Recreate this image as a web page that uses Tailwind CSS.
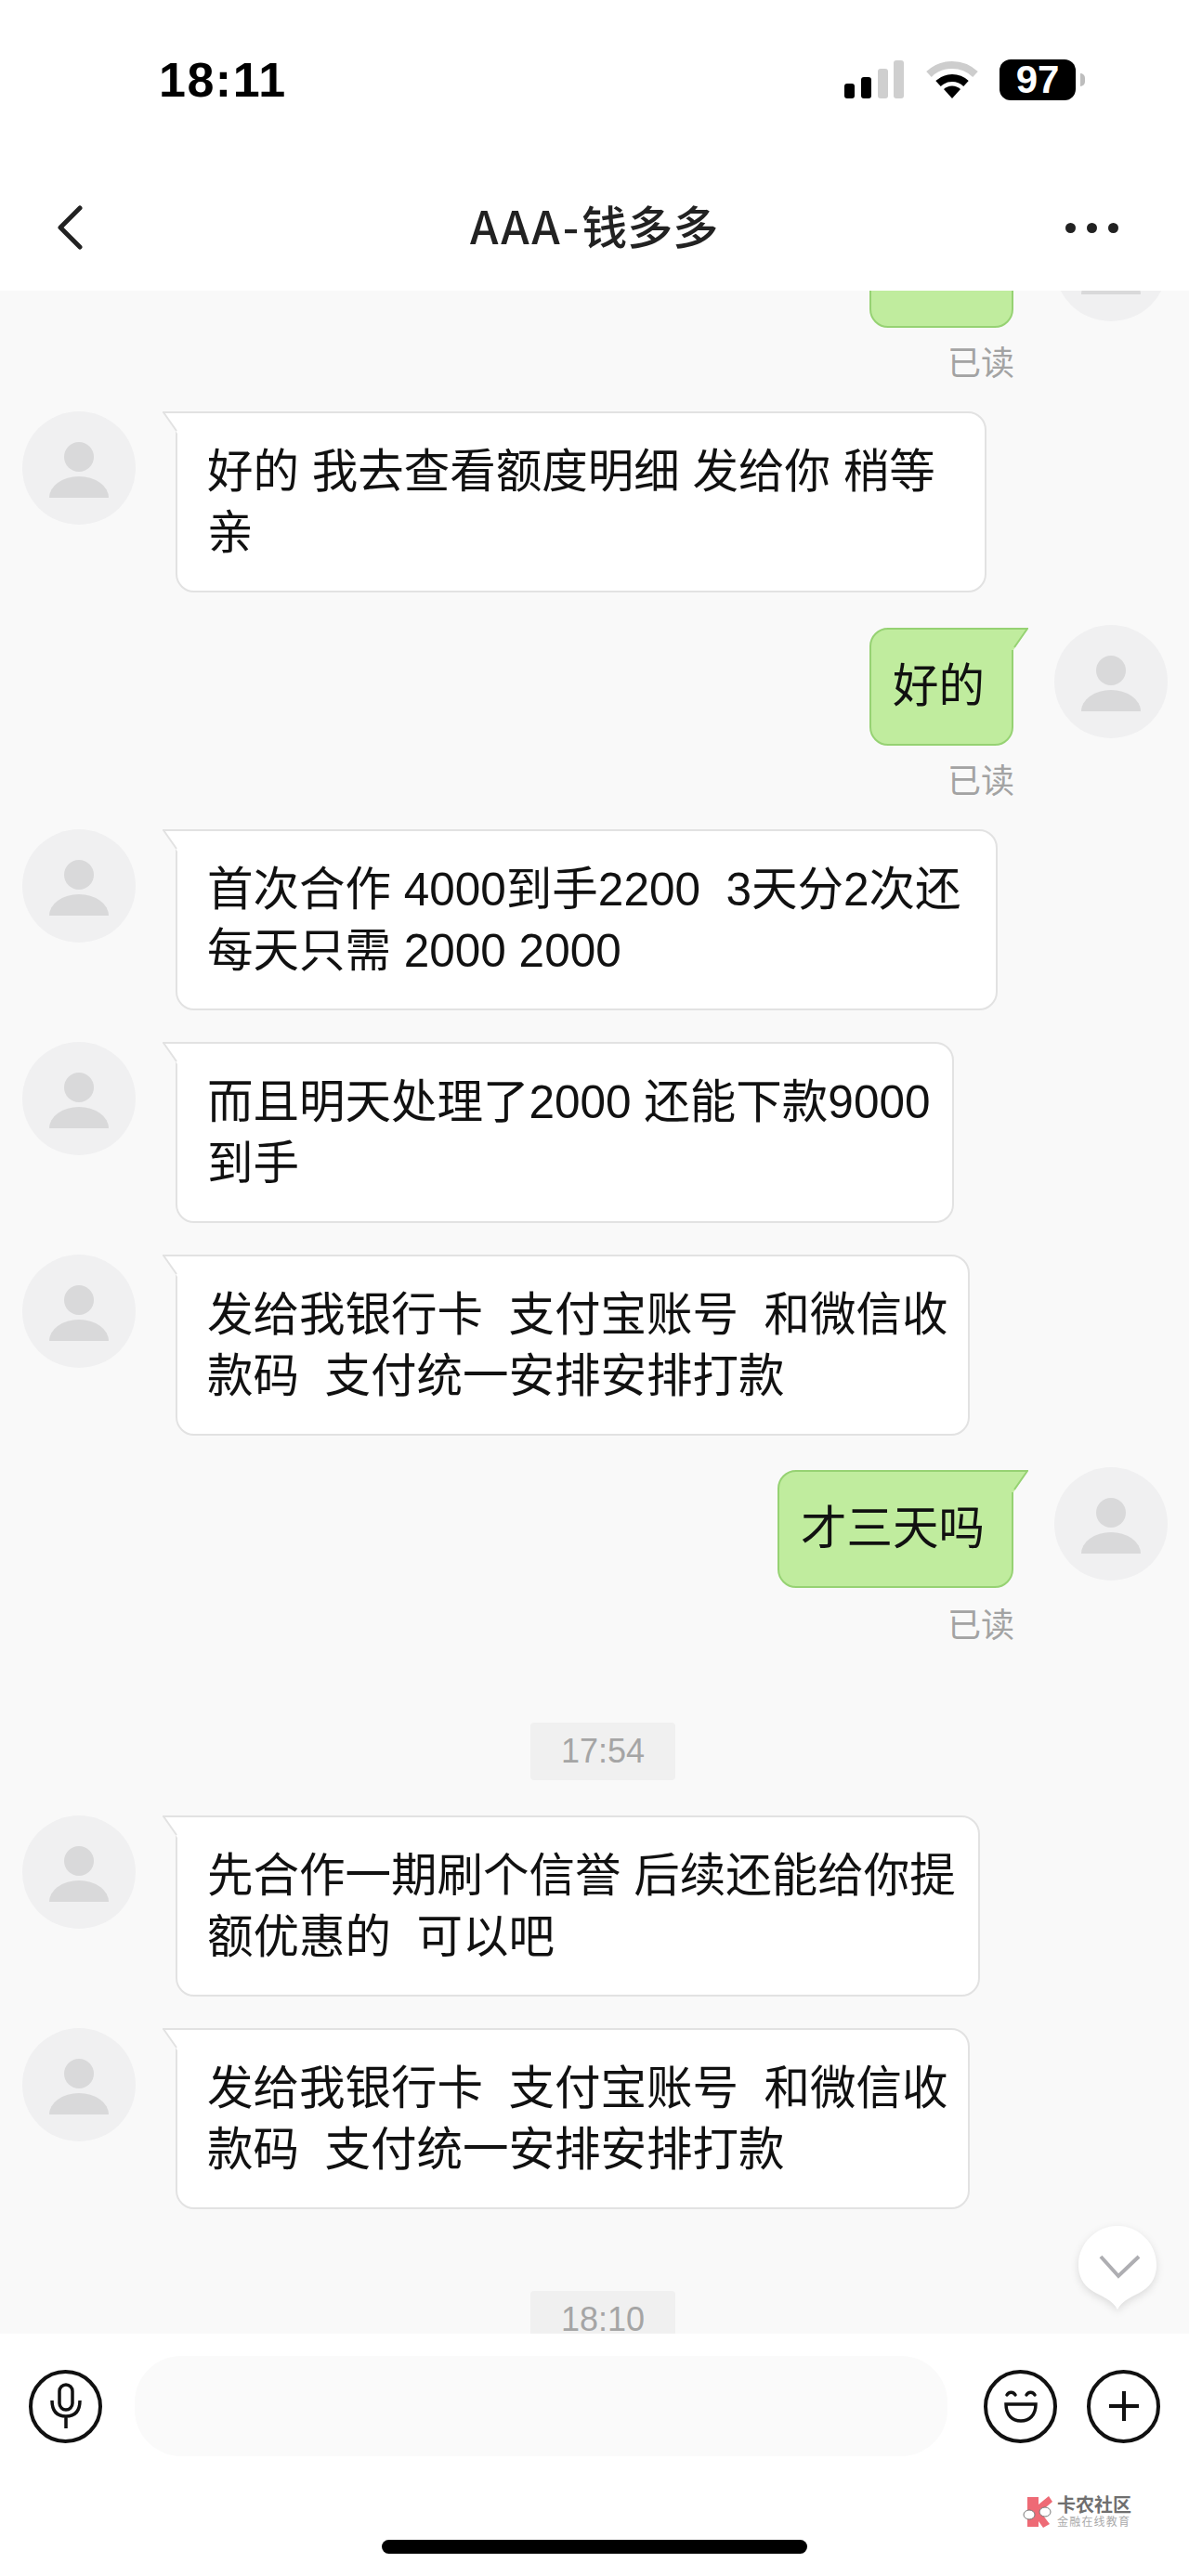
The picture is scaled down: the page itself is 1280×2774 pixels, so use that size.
<!DOCTYPE html>
<html lang="zh-CN">

<head>
  <meta charset="UTF-8" />
  <meta name="viewport" content="width=device-width, initial-scale=1.0" />
  <title>AAA-钱多多</title>
  <script src="https://cdn.jsdelivr.net/npm/@tailwindcss/browser@4"></script>
</head>

<body class="bg-white font-['Liberation_Sans','Noto_Sans_CJK_SC',sans-serif] text-[#111]">
  <svg class="hidden">
    <symbol id="avatar" viewBox="0 0 122 122">
      <circle cx="61" cy="61" r="61" fill="#f0f0f1" />
      <circle cx="61" cy="49" r="16" fill="#d9d9da" />
      <path d="M29 93 A32 23 0 0 1 93 93 Z" fill="#d9d9da" />
    </symbol>
    <symbol id="tail-white" viewBox="0 0 18 24">
      <path d="M0 0 H18 V24 H16 Z" fill="#fff" />
      <path d="M0 1 H18 M1 1 L15 21" fill="none" stroke="#e2e2e2" stroke-width="2" />
    </symbol>
    <symbol id="tail-green" viewBox="0 0 18 24">
      <path d="M18 0 H0 V24 H2 Z" fill="#c0ec9e" />
      <path d="M0 1 H17 L3 21" fill="none" stroke="#96d273" stroke-width="2" />
    </symbol>
  </svg>

  <div class="flex flex-col w-[1280px] h-[2774px] overflow-hidden">
    <!-- status bar + nav -->
    <header class="h-[313px] shrink-0 bg-white relative">
      <div class="flex items-center justify-between h-[44px] mt-[64px] pl-[171px] pr-[112px] relative">
        <span class="text-[52px] font-bold leading-none text-black tracking-[1.5px]">18:11</span>
        <div class="flex items-center">
          <svg width="64" height="41" viewBox="0 0 64 41" class="mr-[24px] mt-[-1px]">
            <rect x="0" y="25" width="11" height="16" rx="3" fill="#000" />
            <rect x="18" y="18" width="11" height="23" rx="3" fill="#000" />
            <rect x="36" y="9" width="11" height="32" rx="3" fill="#cfcfcf" />
            <rect x="53" y="0" width="11" height="41" rx="3" fill="#cfcfcf" />
          </svg>
          <svg width="56" height="41" viewBox="0 0 56 41" class="mr-[23px] mt-[-1px]">
            <path d="M3 15 A36 36 0 0 1 53 15" fill="none" stroke="#cdcdcd" stroke-width="8" />
            <path d="M13 25 A22 22 0 0 1 43 25" fill="none" stroke="#000" stroke-width="8" />
            <path d="M28 41 L19 31 A13 13 0 0 1 37 31 Z" fill="#000" />
          </svg>
          <div class="relative w-[82px] h-[44px] rounded-[12px] bg-black text-white text-[42px] font-bold leading-[44px] text-center">97</div>
          <div class="w-[5px] h-[14px] ml-[5px] rounded-r-full bg-[#bdbdbd]"></div>
        </div>
      </div>
      <nav class="absolute left-0 right-0 top-[213px] h-[64px] flex items-center justify-between pl-[61px] pr-[76px]">
        <svg width="28" height="48" viewBox="0 0 28 48">
          <path d="M25 3 L4 24 L25 45" fill="none" stroke="#222" stroke-width="5" stroke-linecap="round" stroke-linejoin="round" />
        </svg>
        <h1 class="absolute left-[506px] -top-[3px] font-['Noto_Sans_CJK_SC',sans-serif] text-[49px] leading-[64px] font-medium text-[#222]"><span class="tracking-[3px]">AAA-</span>钱多多</h1>
        <div class="flex gap-[12px]">
          <span class="w-[11px] h-[11px] rounded-full bg-[#222]"></span>
          <span class="w-[11px] h-[11px] rounded-full bg-[#222]"></span>
          <span class="w-[11px] h-[11px] rounded-full bg-[#222]"></span>
        </div>
      </nav>
    </header>

    <!-- messages -->
    <main class="relative h-[2200px] shrink-0 overflow-hidden bg-[#f9f9f9] text-[49.5px] leading-[66px]">
      <div class="flex flex-col -mt-[89px]">
        <div class="flex justify-end gap-[44px] pr-[23px]">
          <div class="relative w-[155px] h-[127px] mt-[2px] bg-[#c0ec9e] border-2 border-[#96d273] rounded-[20px] rounded-tr-none"></div>
          <svg class="w-[122px] h-[122px]"><use href="#avatar" /></svg>
        </div>
        <p class="text-right text-[36px] leading-[48px] text-[#a3a3a3] mr-[188px] mt-[15px]">已读</p>

        <div class="flex gap-[43px] pl-[24px] mt-[27px]">
          <svg class="w-[122px] h-[122px] shrink-0"><use href="#avatar" /></svg>
          <div class="relative w-[873px] px-[32px] py-[29.5px] bg-white border-2 border-[#e2e2e2] rounded-[20px] rounded-tl-none whitespace-pre"><svg class="absolute -left-[16px] -top-[2px] w-[18px] h-[24px]"><use href="#tail-white" /></svg>好的 我去查看额度明细 发给你 稍等<br />亲</div>
        </div>

        <div class="flex justify-end gap-[44px] pr-[23px] mt-[35px]">
          <div class="relative h-[127px] mt-[3px] pl-[23px] pr-[29px] py-[28px] bg-[#c0ec9e] border-2 border-[#96d273] rounded-[20px] rounded-tr-none"><svg class="absolute -right-[18px] -top-[2px] w-[18px] h-[24px]"><use href="#tail-green" /></svg>好的</div>
          <svg class="w-[122px] h-[122px] shrink-0"><use href="#avatar" /></svg>
        </div>
        <p class="text-right text-[36px] leading-[48px] text-[#a3a3a3] mr-[188px] mt-[15px]">已读</p>

        <div class="flex gap-[43px] pl-[24px] mt-[27px]">
          <svg class="w-[122px] h-[122px] shrink-0"><use href="#avatar" /></svg>
          <div class="relative w-[885px] px-[32px] py-[29.5px] bg-white border-2 border-[#e2e2e2] rounded-[20px] rounded-tl-none whitespace-pre"><svg class="absolute -left-[16px] -top-[2px] w-[18px] h-[24px]"><use href="#tail-white" /></svg>首次合作 4000到手2200  3天分2次还<br />每天只需 2000 2000</div>
        </div>

        <div class="flex gap-[43px] pl-[24px] mt-[34px]">
          <svg class="w-[122px] h-[122px] shrink-0"><use href="#avatar" /></svg>
          <div class="relative w-[838px] px-[32px] py-[29.5px] bg-white border-2 border-[#e2e2e2] rounded-[20px] rounded-tl-none whitespace-pre"><svg class="absolute -left-[16px] -top-[2px] w-[18px] h-[24px]"><use href="#tail-white" /></svg>而且明天处理了2000 还能下款9000<br />到手</div>
        </div>

        <div class="flex gap-[43px] pl-[24px] mt-[34px]">
          <svg class="w-[122px] h-[122px] shrink-0"><use href="#avatar" /></svg>
          <div class="relative w-[855px] px-[32px] py-[29.5px] bg-white border-2 border-[#e2e2e2] rounded-[20px] rounded-tl-none whitespace-pre"><svg class="absolute -left-[16px] -top-[2px] w-[18px] h-[24px]"><use href="#tail-white" /></svg>发给我银行卡  支付宝账号  和微信收<br />款码  支付统一安排安排打款</div>
        </div>

        <div class="flex justify-end gap-[44px] pr-[23px] mt-[34px]">
          <div class="relative h-[127px] mt-[3px] pl-[23px] pr-[29px] py-[28px] bg-[#c0ec9e] border-2 border-[#96d273] rounded-[20px] rounded-tr-none"><svg class="absolute -right-[18px] -top-[2px] w-[18px] h-[24px]"><use href="#tail-green" /></svg>才三天吗</div>
          <svg class="w-[122px] h-[122px] shrink-0"><use href="#avatar" /></svg>
        </div>
        <p class="text-right text-[36px] leading-[48px] text-[#a3a3a3] mr-[188px] mt-[17px]">已读</p>

        <div class="self-center w-[156px] h-[62px] mt-[80px] ml-[18px] bg-[#f0f0f0] rounded-[4px] text-center text-[36px] leading-[62px] text-[#a5a5a5]">17:54</div>

        <div class="flex gap-[43px] pl-[24px] mt-[38px]">
          <svg class="w-[122px] h-[122px] shrink-0"><use href="#avatar" /></svg>
          <div class="relative w-[866px] px-[32px] py-[29.5px] bg-white border-2 border-[#e2e2e2] rounded-[20px] rounded-tl-none whitespace-pre"><svg class="absolute -left-[16px] -top-[2px] w-[18px] h-[24px]"><use href="#tail-white" /></svg>先合作一期刷个信誉 后续还能给你提<br />额优惠的  可以吧</div>
        </div>

        <div class="flex gap-[43px] pl-[24px] mt-[34px]">
          <svg class="w-[122px] h-[122px] shrink-0"><use href="#avatar" /></svg>
          <div class="relative w-[855px] px-[32px] py-[29.5px] bg-white border-2 border-[#e2e2e2] rounded-[20px] rounded-tl-none whitespace-pre"><svg class="absolute -left-[16px] -top-[2px] w-[18px] h-[24px]"><use href="#tail-white" /></svg>发给我银行卡  支付宝账号  和微信收<br />款码  支付统一安排安排打款</div>
        </div>

        <div class="self-center w-[156px] h-[62px] mt-[88px] ml-[18px] bg-[#f0f0f0] rounded-[4px] text-center text-[36px] leading-[62px] text-[#a5a5a5]">18:10</div>
      </div>

      <!-- scroll to bottom -->
      <svg class="absolute left-[1156px] top-[2080px] drop-shadow-[0_3px_4px_rgba(0,0,0,0.12)]" width="94" height="98" viewBox="0 0 94 98">
        <path d="M47 94 C42 84 30 80 20 74 C9 67 5 57 5 46 C5 23 24 4 47 4 C70 4 89 23 89 46 C89 57 85 67 74 74 C64 80 52 84 47 94 Z" fill="#fff" />
        <path d="M29 37 L48 58 L70 37" fill="none" stroke="#aeaeb2" stroke-width="4" />
      </svg>
    </main>

    <!-- input bar -->
    <footer class="relative flex-1 bg-white">
      <div class="flex items-center h-[108px] mt-[24px] pl-[31px] pr-[31px]">
        <button class="w-[79px] h-[79px] shrink-0 rounded-full border-4 border-[#111] flex items-center justify-center">
          <svg width="40" height="50" viewBox="0 0 40 50" fill="none" stroke="#111" stroke-width="3.5">
            <rect x="13" y="2" width="14" height="27" rx="7" />
            <path d="M5 19 C5 30 10 36 20 36 C30 36 35 30 35 19 M20 36 V49" />
          </svg>
        </button>
        <div class="w-[875px] h-[108px] ml-[35px] rounded-[50px] bg-[#fafafa]"></div>
        <button class="w-[79px] h-[79px] ml-[39px] shrink-0 rounded-full border-4 border-[#111] flex items-center justify-center">
          <svg width="44" height="44" viewBox="0 0 44 44" fill="none" stroke="#111" stroke-width="3.5">
            <path d="M7 10 A5 5 0 0 1 16 10 M28 10 A5 5 0 0 1 37 10" stroke-linecap="round" />
            <path d="M6 20 H38 C38 32 31 38 22 38 C13 38 6 32 6 20 Z" />
          </svg>
        </button>
        <button class="w-[79px] h-[79px] ml-[32px] shrink-0 rounded-full border-4 border-[#111] flex items-center justify-center">
          <svg width="36" height="36" viewBox="0 0 36 36" stroke="#111" stroke-width="4">
            <path d="M2 18 H34 M18 2 V34" />
          </svg>
        </button>
      </div>

      <!-- watermark -->
      <div class="absolute left-[1100px] top-[174px] flex items-center">
        <svg width="36" height="36" viewBox="0 0 36 36">
          <path d="M6 2 H18 V34 H6 Z" fill="#ee6a75" />
          <path d="M18 10 L29 1 L33 7 L20 18 L30 31 L23 35 L18 28 Z" fill="#ee6a75" />
          <ellipse cx="8" cy="21" rx="6" ry="5" fill="#fff" stroke="#777" stroke-width="1" />
          <ellipse cx="25" cy="18" rx="6" ry="5" fill="#fff" stroke="#777" stroke-width="1" />
        </svg>
        <div class="ml-[2px] text-[#6f6f6f]">
          <div class="text-[20px] leading-[22px] font-bold">卡农社区</div>
          <div class="text-[12px] leading-[14px] tracking-[1.2px] text-[#aaa]">金融在线教育</div>
        </div>
      </div>

      <div class="absolute left-[411px] top-[222px] w-[458px] h-[15px] rounded-full bg-black"></div>
    </footer>
  </div>
</body>

</html>
